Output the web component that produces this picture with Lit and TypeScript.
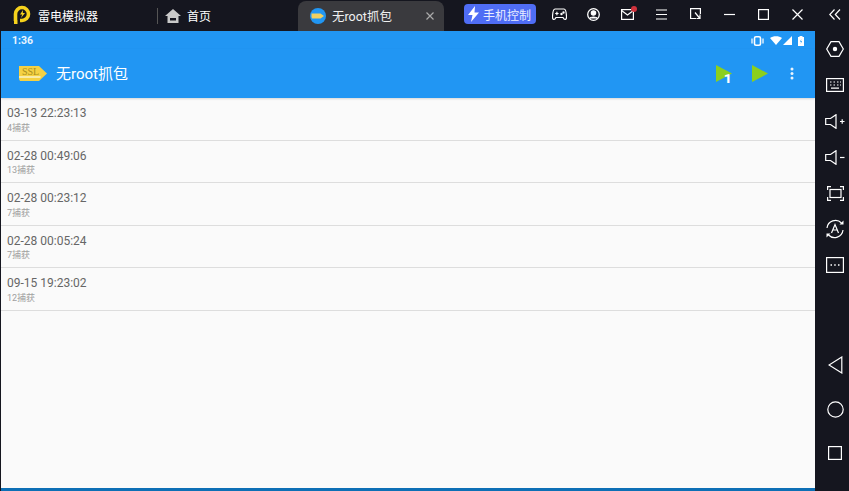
import { LitElement, html, css, svg } from "lit";
import { customElement } from "lit/decorators.js";

const rows = [
  ["03-13 22:23:13", "4捕获"],
  ["02-28 00:49:06", "13捕获"],
  ["02-28 00:23:12", "7捕获"],
  ["02-28 00:05:24", "7捕获"],
  ["09-15 19:23:02", "12捕获"],
];

const ic = (w: number, h: number, body: unknown) => html`<svg width=${w} height=${h} viewBox="0 0 ${w} ${h}" fill="none" stroke="#fff" stroke-width="1.2">${body}</svg>`;

@customElement("app-root")
export class AppRoot extends LitElement {
  static styles = css`
    :host { display: block; width: 849px; height: 491px; overflow: hidden; background: #15161f; font-family: "Roboto", "Noto Sans CJK SC", sans-serif; }
    .shell { display: grid; grid-template-columns: 815px 34px; grid-template-rows: 31px 460px; width: 849px; height: 491px; }
    .top { grid-column: 1 / 3; display: flex; align-items: center; height: 31px; color: #fff; }
    .logo { margin-left: 13px; width: 19px; height: 19px; flex: none; margin-bottom: 2px; }
    .brand { margin-left: 6px; font-size: 12px; width: 68px; flex: none; white-space: nowrap; }
    .sep { width: 1px; height: 16px; background: #555; margin-left: 51px; flex: none; }
    .home { margin-left: 7px; flex: none; }
    .homet { font-size: 12px; margin-left: 6px; width: 111px; flex: none; }
    .tab { width: 146px; height: 30px; margin-top: 1px; flex: none; background: #3a3a3e; border-radius: 8px 8px 0 0; display: flex; align-items: center; box-sizing: border-box; padding: 0 0 1px 12px; font-size: 12.5px; color: #f0f0f0; }
    .tabicon { flex: none; }
    .tabt { margin-left: 6px; width: 94px; white-space: nowrap; }
    .ctl { margin-left: 20px; width: 72px; height: 20px; margin-bottom: 3px; flex: none; border-radius: 4px; background: #4f6df5; display: flex; align-items: center; font-size: 12px; padding-left: 3px; box-sizing: border-box; white-space: nowrap; gap: 3px; color: #e8ecff; }
    .tools { display: flex; align-items: center; margin-left: 6px; margin-bottom: 3px; }
    .cell { width: 34px; height: 20px; display: flex; align-items: center; justify-content: center; flex: none; }
    .mail { position: relative; display: flex; }
    .dot { position: absolute; top: -3px; right: -3px; width: 6px; height: 6px; border-radius: 50%; background: #d0323c; }
    .collapse { margin-left: 4px; }
    .screen { background: #fafafa; border-left: 1px solid #15161f; display: flex; flex-direction: column; box-sizing: border-box; height: 460px; }
    .status { background: #2196f3; height: 18px; display: flex; align-items: center; color: #e8f4ff; font-size: 10.5px; font-weight: 700; padding: 1px 11px 0 11px; box-sizing: border-box; justify-content: space-between; }
    .sicons { display: flex; align-items: center; }
    .sig { margin-left: 1px; }
    .wifi { margin-left: 6px; }
    .batt { margin-left: 6px; }
    .bar { background: #2196f3; height: 49px; display: flex; align-items: center; color: #fff; box-shadow: 0 1px 2px rgba(0,0,0,.15); padding-left: 18px; }
    .title { font-size: 15px; margin-left: 9px; margin-bottom: 2px; flex: 1; font-weight: 400; }
    .play { position: relative; display: flex; }
    .badge { position: absolute; left: 8px; top: 7px; font-size: 13px; line-height: 14px; font-weight: 900; color: #fff; }
    .acts { display: flex; align-items: center; gap: 20px; padding-right: 21px; }
    .acts .dots { margin-left: 2px; }
    .list { flex: 1; }
    .row { height: 42.6px; border-bottom: 1px solid #ddd; box-sizing: border-box; padding: 8px 0 0 6px; }
    .time { font-size: 12px; line-height: 15px; color: #666; }
    .sub { font-size: 9px; line-height: 12px; margin-top: .5px; color: #a0a0a0; }
    .foot { height: 3px; background: #0d6fb5; flex: none; }
    .side { display: flex; flex-direction: column; align-items: center; height: 460px; padding-left: 6px; box-sizing: border-box; }
    .sbtn { height: 36px; display: flex; align-items: center; justify-content: center; flex: none; }
    .nav { height: 44px; display: flex; align-items: center; justify-content: center; flex: none; }
    .spacer { height: 60px; flex: none; }
  `;

  render() {
    return html`<div class="shell">
      <div class="top">
        <svg class="logo" viewBox="0 0 19 19" fill="none">
          <path d="M2.500 16V9A6.500 6.500 0 1 1 9 15.500H7" stroke="#f6d21c" stroke-width="3.600"/>
          <rect x="1" y="15.500" width="3.500" height="3.500" fill="#f6d21c"/>
          <path d="M10 5L7 9.500H9.200L8 13L12 8H9.800Z" fill="#f6d21c"/>
        </svg>
        <span class="brand">雷电模拟器</span>
        <span class="sep"></span>
        <svg class="home" width="16" height="14" viewBox="0 0 16 14"><path d="M8 0L16 7H13.500V14H2.500V7H0Z" fill="#c9c9c9"/><rect x="5" y="9" width="6" height="2.500" fill="#15161f"/></svg>
        <span class="homet">首页</span>
        <div class="tab">
          <svg class="tabicon" width="16" height="16" viewBox="0 0 16 16"><circle cx="8" cy="8" r="8" fill="#2196f3"/><path d="M1.500 5.500H10.500L14 8L10.500 10.500H2L1.500 9Z" fill="#f0d060"/></svg>
          <span class="tabt">无root抓包</span>
          ${ic(8, 8, svg`<path d="M.5 .5L7.500 7.500M7.500 .5L.5 7.500" stroke="#aaa"/>`)}
        </div>
        <div class="ctl">
          <svg width="13" height="16" viewBox="0 0 13 16"><path d="M8 0L1 9H5.500L4 16L12 6.500H7.500Z" fill="#fff"/></svg>
          <span>手机控制</span>
        </div>
        <div class="tools">
          <div class="cell">${ic(15, 13, svg`<path d="M3 1H12C13.500 1 14.300 4 14.500 8.500C14.700 12 12.500 12.500 11 9.500H4C2.500 12.500 .3 12 .5 8.500C.7 4 1.500 1 3 1Z"/><path d="M3.200 5.500H6.600M4.900 3.800V7.200"/><circle cx="9.500" cy="6" r=".6"/><circle cx="11.500" cy="4.500" r=".6"/>`)}</div>
          <div class="cell">${ic(13, 13, svg`<circle cx="6.500" cy="6.500" r="5.800" stroke-width="1.300"/><circle cx="6.500" cy="5" r="2.200" fill="#fff"/><path d="M2.500 10.500C3.500 8.500 9.500 8.500 10.500 10.500" fill="#fff"/>`)}</div>
          <div class="cell"><span class="mail">${ic(13, 11, svg`<rect x=".6" y=".6" width="11.800" height="9.800"/><path d="M.6 1.500L6.500 6L12.400 1.500"/>`)}<span class="dot"></span></span></div>
          <div class="cell">${ic(11, 11, svg`<path d="M0 1H11M0 5.500H11M0 10H11"/>`)}</div>
          <div class="cell">${ic(11, 12, svg`<path d="M6 10.500H.6V.6H10.400V6"/><path d="M5 4.500L9.500 10M10 6.500V10.500H6.500"/>`)}</div>
          <div class="cell">${ic(11, 11, svg`<path d="M0 5.500H11"/>`)}</div>
          <div class="cell">${ic(11, 11, svg`<rect x=".6" y=".6" width="9.800" height="9.800"/>`)}</div>
          <div class="cell">${ic(11, 11, svg`<path d="M.5 .5L10.500 10.500M10.500 .5L.5 10.500"/>`)}</div>
          <div class="cell collapse">${ic(12, 11, svg`<path d="M5.500 .5L.8 5.500L5.500 10.500M11 .5L6.300 5.500L11 10.500"/>`)}</div>
        </div>
      </div>
      <div class="screen">
        <div class="status">
          <span>1:36</span>
          <div class="sicons">
            <svg width="13" height="10" viewBox="0 0 13 10"><rect x="3.500" y=".8" width="6" height="8.400" rx="1.500" fill="none" stroke="#fff" stroke-width="1.600"/><path d="M1 2.500V7.500M12 2.500V7.500" stroke="#cfe7fb" stroke-width="1.600"/></svg>
            <svg class="wifi" width="12" height="9" viewBox="0 0 12 9"><path d="M0 2C3 -.5 9 -.5 12 2L6 9Z" fill="#fff"/></svg>
            <svg class="sig" width="9" height="9" viewBox="0 0 9 9"><path d="M9 0V9H0Z" fill="#fff"/></svg>
            <svg class="batt" width="6" height="10" viewBox="0 0 6 10"><path d="M1.500 1H4.500V0H1.500ZM0 1H6V10H0Z" fill="#fff"/><path d="M3.300 3L2 5.800H3L2.700 8L4 5H3Z" fill="#2196f3"/></svg>
          </div>
        </div>
        <div class="bar">
          <svg width="28" height="16" viewBox="0 0 28 16">
            <path d="M0 0H20L28 7.500L20 15H1L0 13Z" fill="#f5d143"/>
            <path d="M0 11H21.500" stroke="#f9f3c8" stroke-width="1.500"/>
            <text x="3" y="9" font-size="10" font-family="Liberation Serif" fill="#a98f20">SSL</text>
          </svg>
          <span class="title">无root抓包</span>
          <div class="acts">
            <span class="play">
              <svg width="16" height="17" viewBox="0 0 16 17"><path d="M0 0L16 8.500L0 17Z" fill="#8ccf1e"/></svg>
              <span class="badge">1</span>
            </span>
            <svg width="16" height="17" viewBox="0 0 16 17"><path d="M0 0L16 8.500L0 17Z" fill="#8ccf1e"/></svg>
            <svg class="dots" width="4" height="13" viewBox="0 0 4 13"><circle cx="2" cy="2" r="1.500" fill="#eaf4fd"/><circle cx="2" cy="6.500" r="1.500" fill="#eaf4fd"/><circle cx="2" cy="11" r="1.500" fill="#eaf4fd"/></svg>
          </div>
        </div>
        <div class="list">
          ${rows.map((r) => html`<div class="row"><div class="time">${r[0]}</div><div class="sub">${r[1]}</div></div>`)}
        </div>
        <div class="foot"></div>
      </div>
      <div class="side">
        <div class="sbtn">${ic(18, 16, svg`<path d="M5 .7H13L17.300 8L13 15.300H5L.7 8Z"/><circle cx="9" cy="8" r="1.600" fill="#fff"/>`)}</div>
        <div class="sbtn">${ic(18, 14, svg`<rect x=".6" y=".6" width="16.800" height="12.800"/><path d="M4 4H5.500M7.500 4H9M11 4H12.500M14 4H15M4 7H5.500M7.500 7H9M11 7H12.500M14 7H15M5 10.200H13"/>`)}</div>
        <div class="sbtn">${ic(20, 15, svg`<path d="M.7 4.500H5.500L11 .7V14.300L5.500 10.500H.7Z"/><path d="M15 7.500H19.500M17.200 5.300V9.700"/>`)}</div>
        <div class="sbtn">${ic(20, 15, svg`<path d="M.7 4.500H5.500L11 .7V14.300L5.500 10.500H.7Z"/><path d="M15 7.500H19.500"/>`)}</div>
        <div class="sbtn">${ic(17, 15, svg`<path d="M.6 4V.6H4M13 .6H16.400V4M.6 11V14.400H4M13 14.400H16.400V11"/><rect x="3" y="3.500" width="11" height="8"/>`)}</div>
        <div class="sbtn">${ic(20, 20, svg`<path d="M2 9A8.500 8.500 0 0 1 16.500 4M18 11A8.500 8.500 0 0 1 3.500 16"/><path d="M14.500 5.500H18.500V1.500ZM5.500 14.500H1.500V18.500Z" fill="#fff" stroke="none"/><path d="M6.500 14L10 5.500L13.500 14M7.800 11H12.200"/>`)}</div>
        <div class="sbtn">${ic(18, 16, svg`<rect x=".6" y=".6" width="16.800" height="14.800"/><path d="M4.500 8H6M8.200 8H9.700M12 8H13.500" stroke-width="1.600"/>`)}</div>
        <div class="spacer"></div>
        <div class="nav">${ic(15, 18, svg`<path d="M13.800 1V17L1 9Z"/>`)}</div>
        <div class="nav">${ic(17, 17, svg`<circle cx="8.500" cy="8.500" r="7.700"/>`)}</div>
        <div class="nav">${ic(14, 14, svg`<rect x=".6" y=".6" width="12.800" height="12.800"/>`)}</div>
      </div>
    </div>`;
  }
}
